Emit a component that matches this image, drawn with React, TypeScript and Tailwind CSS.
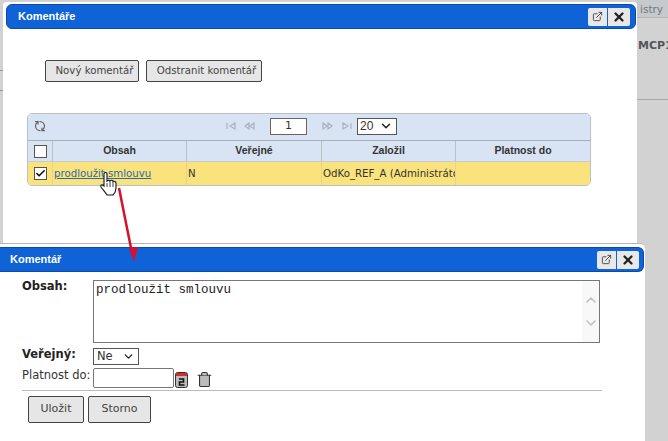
import React from "react";
import { ChevronDown, ChevronUp, ExternalLink, RefreshCw, X, Trash2, Check } from "lucide-react";

const sans = "font-['DejaVu_Sans',sans-serif]";

const TitleBar = ({ title, className }: { title: string; className: string }) => (
  <div className={`flex items-center justify-between bg-[#0f63d6] border border-[#0a4aa8] text-white ${className}`}>
    <span className="pb-px font-['Liberation_Sans',sans-serif] text-[11px] font-bold">{title}</span>
    <div className="flex gap-px">
      <div className="flex h-[18px] w-[19px] items-center justify-center rounded-l-[2px] bg-[#e8e8e8]">
        <ExternalLink size={11} className="text-[#444]" />
      </div>
      <div className="flex h-[18px] w-[22px] items-center justify-center rounded-r-[2px] bg-[#e8e8e8]">
        <X size={14} strokeWidth={4} className="text-[#222]" />
      </div>
    </div>
  </div>
);

const Btn = ({ label, className }: { label: string; className: string }) => (
  <button className={`flex items-center justify-center rounded-[2px] border border-[#444] bg-[#e6e6e6] text-[#444] ${sans} ${className}`}>
    {label}
  </button>
);

const PagerArrow = ({ d }: { d: string }) => (
  <svg width="11" height="8" viewBox="0 0 11 8" className="text-[#a9b4c2]">
    <path d={d} fill="none" stroke="currentColor" strokeWidth="1.2" />
  </svg>
);

const Grid = () => (
  <div className={`w-[564px] overflow-hidden rounded-[5px] border border-[#b9c0c8] ${sans} text-[10.2px] text-[#333]`}>
    <div className="flex h-[27px] items-center border-b border-[#a8b0ba] bg-[#d8e3f3] pb-[2px]">
      <RefreshCw size={12} strokeWidth={2.5} className="ml-[6px] rotate-90 text-[#666]" />
      <div className="ml-[180px] flex items-center gap-[6px]">
        <div className="flex items-center gap-[7px]">
          <PagerArrow d="M1 1v6M9 1L4 4l5 3z" />
          <PagerArrow d="M5 1L1 4l4 3zM10 1L6 4l4 3z" />
        </div>
        <div className="ml-[9px] flex h-[17px] w-[37px] items-center justify-center border border-[#666] bg-white text-[11px]">1</div>
        <div className="ml-[9px] flex items-center gap-[9px]">
          <PagerArrow d="M1 1l4 3-4 3zM6 1l4 3-4 3z" />
          <PagerArrow d="M1 1l5 3-5 3zM9 1v6" />
        </div>
        <div className="ml-[-2px] flex h-[17px] w-[40px] items-center justify-between border border-[#555] bg-white pl-[2px] pr-[3px] font-['Liberation_Sans',sans-serif] text-[12px]">
          20
          <ChevronDown size={14} strokeWidth={2.5} className="text-[#222]" />
        </div>
      </div>
    </div>
    <div className="grid h-[21px] grid-cols-[25px_134px_135px_134px_1fr] border-b border-[#c4cbd4] bg-[#d8e3f3] font-['Liberation_Sans',sans-serif] text-[10.5px] font-bold">
      <div className="flex items-center justify-center border-r border-[#b9c0c8]">
        <div className="h-[13px] w-[13px] border border-[#555] bg-white" />
      </div>
      {["Obsah", "Veřejné", "Založil", "Platnost do"].map((h) => (
        <div key={h} className="border-r border-[#b9c0c8] pt-[2px] text-center last:border-r-0">{h}</div>
      ))}
    </div>
    <div className="grid h-[23px] grid-cols-[25px_134px_135px_134px_1fr] items-stretch bg-[#fae37c]">
      <div className="flex items-center justify-center border-r border-[#e5d48a]">
        <div className="flex h-[13px] w-[13px] items-center justify-center border border-[#555] bg-white">
          <Check size={11} strokeWidth={3.5} className="text-[#111]" />
        </div>
      </div>
      <div className="flex items-center border-r border-[#e5d48a] pl-px">
        <a className="text-[#2c6aa8] underline">prodloužit smlouvu</a>
      </div>
      <div className="flex items-center border-r border-[#e5d48a] pl-px">N</div>
      <div className="flex items-center overflow-hidden whitespace-nowrap border-r border-[#e5d48a] pl-px">OdKo_REF_A (Administrátor)</div>
      <div />
    </div>
  </div>
);

export default function App() {
  return (
    <div className={`relative h-[441px] w-[668px] overflow-hidden bg-[#d2d2d2] ${sans}`}>
      {/* page behind the dialogs */}
      <div className="absolute left-[637px] top-0 h-[18px] w-[31px] border-b border-[#b5b5b5] bg-[#c6c9ce] pl-[3px] pt-[2px] text-[10.5px] text-[#777]">istry</div>
      <div className="absolute left-[638px] top-[38px] text-[11px] font-bold text-[#555]">MCP1E</div>
      <div className="absolute left-[637px] top-[99px] h-px w-[31px] bg-[#aaa]" />
      <div className="absolute left-0 top-[70px] h-px w-[3px] bg-[#999]" />
      <div className="absolute left-0 top-[90px] h-px w-[3px] bg-[#999]" />

      {/* Komentáře */}
      <div className="absolute left-[3px] top-[2px] h-[242px] w-[634px] rounded-t-[4px] bg-white">
        <TitleBar title="Komentáře" className="mx-[3px] mt-[2px] h-[25px] w-[630px] rounded-[6px] pl-[11px] pr-[5px]" />
        <div className="ml-[42px] mt-[31px] flex gap-[7px]">
          <Btn label="Nový komentář" className="h-[22px] w-[94px] pl-[5px] text-[10.2px]" />
          <Btn label="Odstranit komentář" className="h-[22px] w-[116px] pl-[5px] text-[10.2px]" />
        </div>
        <div className="ml-[24px] mt-[31px]">
          <Grid />
        </div>
      </div>

      {/* Komentář */}
      <div className="absolute left-0 top-[243px] h-[198px] w-[645px] rounded-tr-[5px] border-t border-[#b5b5b5] bg-white">
        <TitleBar title="Komentář" className="mt-[3px] h-[25px] w-[644px] rounded-r-[6px] border-l-0 pl-[10px] pr-[4px]" />
        <div className="ml-[22px] mt-[8px] flex items-start">
          <span className="w-[71px] text-[11.5px] font-bold leading-[12px] text-[#222]">Obsah:</span>
          <div className="relative h-[63px] w-[507px] border border-[#777] bg-white pl-[2px] pt-[2px] font-['Liberation_Mono',monospace] text-[12.5px] leading-[14px] text-[#222]">
            prodloužit smlouvu
            <div className="absolute bottom-0 right-0 top-0 flex w-[17px] flex-col items-center justify-center gap-[7px] bg-[#f8f8f8]">
              <ChevronUp size={16} strokeWidth={2.5} className="text-[#c4c4c4]" />
              <ChevronDown size={16} strokeWidth={2.5} className="text-[#c4c4c4]" />
            </div>
          </div>
        </div>
        <div className="ml-[22px] mt-[5px] flex items-start">
          <span className="w-[71px] text-[11.5px] font-bold leading-[12px] text-[#222]">Veřejný:</span>
          <div className="flex h-[17px] w-[46px] items-center justify-between border border-[#555] bg-white pl-[3px] pr-[3px] text-[11.5px] text-[#333]">
            Ne
            <ChevronDown size={13} strokeWidth={2.5} className="text-[#222]" />
          </div>
        </div>
        <div className="ml-[22px] mt-[3px] flex items-start">
          <span className="w-[71px] whitespace-nowrap text-[11.5px] leading-[14px] text-[#333]">Platnost do:</span>
          <div className="h-[20px] w-[81px] rounded-[2px] border border-[#777] bg-white" />
          <svg width="13" height="16" viewBox="0 0 13 16" className="ml-[1px] mt-[4px]">
            <rect x="0.5" y="0.5" width="12" height="15" rx="2" fill="#bbb" stroke="#333" />
            <rect x="1" y="1" width="11" height="3" fill="#d92b2b" />
            <path d="M4 7h4.5v3h-4v3h5" fill="none" stroke="#111" strokeWidth="1.6" />
          </svg>
          <Trash2 size={17} strokeWidth={1.5} className="ml-[8px] mt-[3px] fill-[#bbb] text-[#333]" />
        </div>
        <div className="ml-[22px] mt-[2px] h-px w-[580px] bg-[#bbb]" />
        <div className="ml-[28px] mt-[5px] flex gap-[4px]">
          <Btn label="Uložit" className="h-[27px] w-[56px] text-[11px]" />
          <Btn label="Storno" className="h-[27px] w-[63px] text-[11px]" />
        </div>
      </div>

      {/* annotation arrow */}
      <svg width="30" height="90" viewBox="0 0 30 90" className="absolute left-[115px] top-[185px]">
        <path d="M4 3L17 68" stroke="#d8112a" strokeWidth="2.5" fill="none" />
        <path d="M14 63l9-1-4 15z" fill="#d8112a" />
      </svg>

      {/* mouse cursor */}
      <svg width="20" height="24" viewBox="0 0 20 24" className="absolute left-[99px] top-[172px]">
        <path d="M5 2c0-2 3-2 3 0v7c1-1 3-1 3 0 1-1 3-1 3 .5 1-.5 3 0 3 1.5v5c0 4-2 6-3 7H8c-1-2-3-4-6-8-1-2 1-3 3-1z" fill="#fff" stroke="#111" strokeWidth="1.1" />
        <path d="M8 11v4M11 10v5M14 10v5" stroke="#111" strokeWidth="0.8" />
      </svg>
    </div>
  );
}
